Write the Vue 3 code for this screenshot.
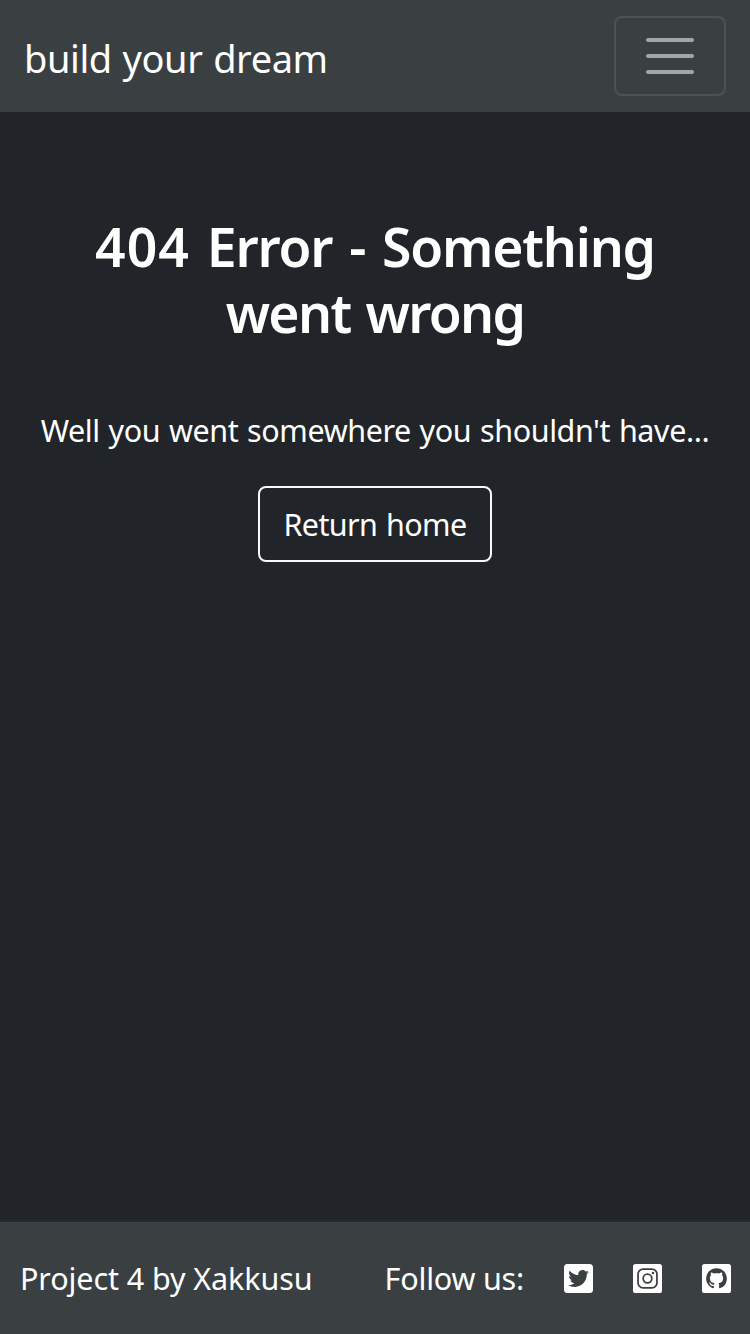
<script setup>
const brand = 'build your dream'
</script>

<template>
  <div class="page">
    <header class="navbar">
      <a class="brand">{{ brand }}</a>
      <button class="toggler" aria-label="Toggle navigation">
        <svg viewBox="0 0 60 60" width="60" height="60">
          <path d="M8 14h44M8 30h44M8 46h44" />
        </svg>
      </button>
    </header>

    <main class="content">
      <h1><span class="first"><b>404</b> Error - Something</span><span class="second">went wrong</span></h1>
      <p>Well you went somewhere you shouldn't have...</p>
      <a class="home">Return home</a>
    </main>

    <footer class="footer">
      <span class="credit">Project 4 by Xakkusu</span>
      <div class="social">
        <span class="follow">Follow us:</span>
        <svg class="icon" viewBox="0 32 448 448" aria-label="Twitter">
          <path fill="#fff" d="M400 32H48C21.5 32 0 53.5 0 80v352c0 26.5 21.5 48 48 48h352c26.5 0 48-21.5 48-48V80c0-26.5-21.5-48-48-48zm-48.900 158.800c.2 2.800.2 5.700.2 8.500 0 86.700-66 186.600-186.600 186.600-37.200 0-71.700-10.800-100.700-29.400 5.300.6 10.400.8 15.800.8 30.700 0 58.900-10.400 81.400-28-28.800-.6-53-19.500-61.300-45.500 10.100 1.500 19.200 1.500 29.600-1.200-30-6.100-52.500-32.500-52.500-64.400v-.8c8.700 4.900 18.900 7.900 29.600 8.300a65.447 65.447 0 0 1-29.200-54.600c0-12.200 3.200-23.400 8.900-33.100 32.300 39.800 80.800 65.800 135.200 68.600-9.300-44.500 24-80.600 64-80.600 18.900 0 35.900 7.900 47.900 20.700 14.800-2.800 29-8.300 41.600-15.800-4.900 15.200-15.200 28-28.800 36.100 13.200-1.400 26-5.100 37.800-10.200-8.900 13.100-20.100 24.700-32.900 34z" />
        </svg>
        <svg class="icon" viewBox="0 32 448 448" aria-label="Instagram">
          <rect y="32" width="448" height="448" rx="40" fill="#fff" />
          <g fill="none" stroke="#3a3f42" stroke-width="27">
            <rect x="78" y="110" width="292" height="292" rx="78" />
            <circle cx="224" cy="256" r="67" />
          </g>
          <circle cx="309" cy="171" r="19" fill="#3a3f42" />
        </svg>
        <svg class="icon" viewBox="0 0 448 448" aria-label="GitHub">
          <rect width="448" height="448" rx="40" fill="#fff" />
          <path transform="translate(64 64) scale(20)" fill="#3a3f42" d="M8 0C3.580 0 0 3.580 0 8c0 3.540 2.290 6.530 5.470 7.590.4.07.55-.17.55-.38 0-.19-.01-.82-.01-1.490-2.010.37-2.530-.49-2.690-.94-.09-.23-.48-.94-.82-1.130-.28-.15-.68-.52-.01-.53.63-.01 1.080.58 1.230.82.72 1.210 1.870.87 2.330.66.07-.52.28-.87.51-1.070-1.780-.2-3.640-.89-3.640-3.950 0-.87.31-1.590.82-2.150-.08-.2-.36-1.020.08-2.120 0 0 .67-.21 2.200.82.64-.18 1.320-.27 2-.27s1.360.09 2 .27c1.530-1.040 2.200-.82 2.200-.82.44 1.100.16 1.920.08 2.120.51.56.82 1.270.82 2.150 0 3.070-1.870 3.750-3.650 3.950.29.25.54.73.54 1.480 0 1.070-.01 1.930-.01 2.200 0 .21.15.46.55.38A8.010 8.010 0 0 0 16 8c0-4.420-3.580-8-8-8z" />
        </svg>
      </div>
    </footer>
  </div>
</template>

<style>
body {
  background: #212529;
}
</style>

<style scoped>
.page {
  display: flex;
  flex-direction: column;
  height: 1334px;
  overflow: hidden;
  box-sizing: border-box;
  background: #212529;
  color: #fff;
  font-family: "Segoe UI", "Noto Sans", "Open Sans", sans-serif;
  font-size: 30.5px;
  line-height: 48px;
  white-space: nowrap;
}
.navbar {
  box-sizing: border-box;
  height: 112px;
  padding: 16px 24px;
  display: flex;
  align-items: center;
  justify-content: space-between;
  background: #3a3f42;
}
.brand {
  font-size: 38px;
  line-height: 60px;
  letter-spacing: -0.4px;
  word-spacing: 1.2px;
  padding-top: 3px;
}
.toggler {
  box-sizing: border-box;
  width: 112px;
  height: 80px;
  padding: 0;
  display: flex;
  align-items: center;
  justify-content: center;
  background: none;
  border: 2px solid #4e5255;
  border-radius: 8px;
}
.toggler path {
  fill: none;
  stroke: #a3a6a8;
  stroke-width: 4;
  stroke-linecap: round;
}
.content {
  flex: 1;
  padding-top: 102px;
  display: flex;
  flex-direction: column;
  align-items: center;
}
h1 {
  margin: 0;
  font-size: 53.5px;
  font-weight: 600;
  line-height: 66px;
  text-align: center;
}
h1 span {
  display: block;
}
h1 b {
  font-weight: 600;
  letter-spacing: 1px;
}
.first {
  letter-spacing: -1.2px;
  word-spacing: 4.2px;
}
.second {
  letter-spacing: -1.7px;
  word-spacing: 3px;
}
p {
  margin: 60px 0 32px;
  letter-spacing: -0.4px;
  word-spacing: 1.2px;
}
.home {
  box-sizing: border-box;
  width: 234px;
  height: 76px;
  border: 2px solid #f8f9fa;
  border-radius: 8px;
  text-align: center;
  line-height: 72px;
  letter-spacing: -0.6px;
  word-spacing: 1.2px;
}
.credit {
  letter-spacing: -0.1px;
}
.follow {
  letter-spacing: -0.2px;
}
.footer {
  box-sizing: border-box;
  height: 114px;
  padding: 0 19px 0 20px;
  border-top: 2px solid #25292d;
  display: flex;
  align-items: center;
  justify-content: space-between;
  background: #3a3f42;
}
.social {
  display: flex;
  align-items: center;
  gap: 40px;
}
.icon {
  width: 29px;
  height: 29px;
}
</style>
